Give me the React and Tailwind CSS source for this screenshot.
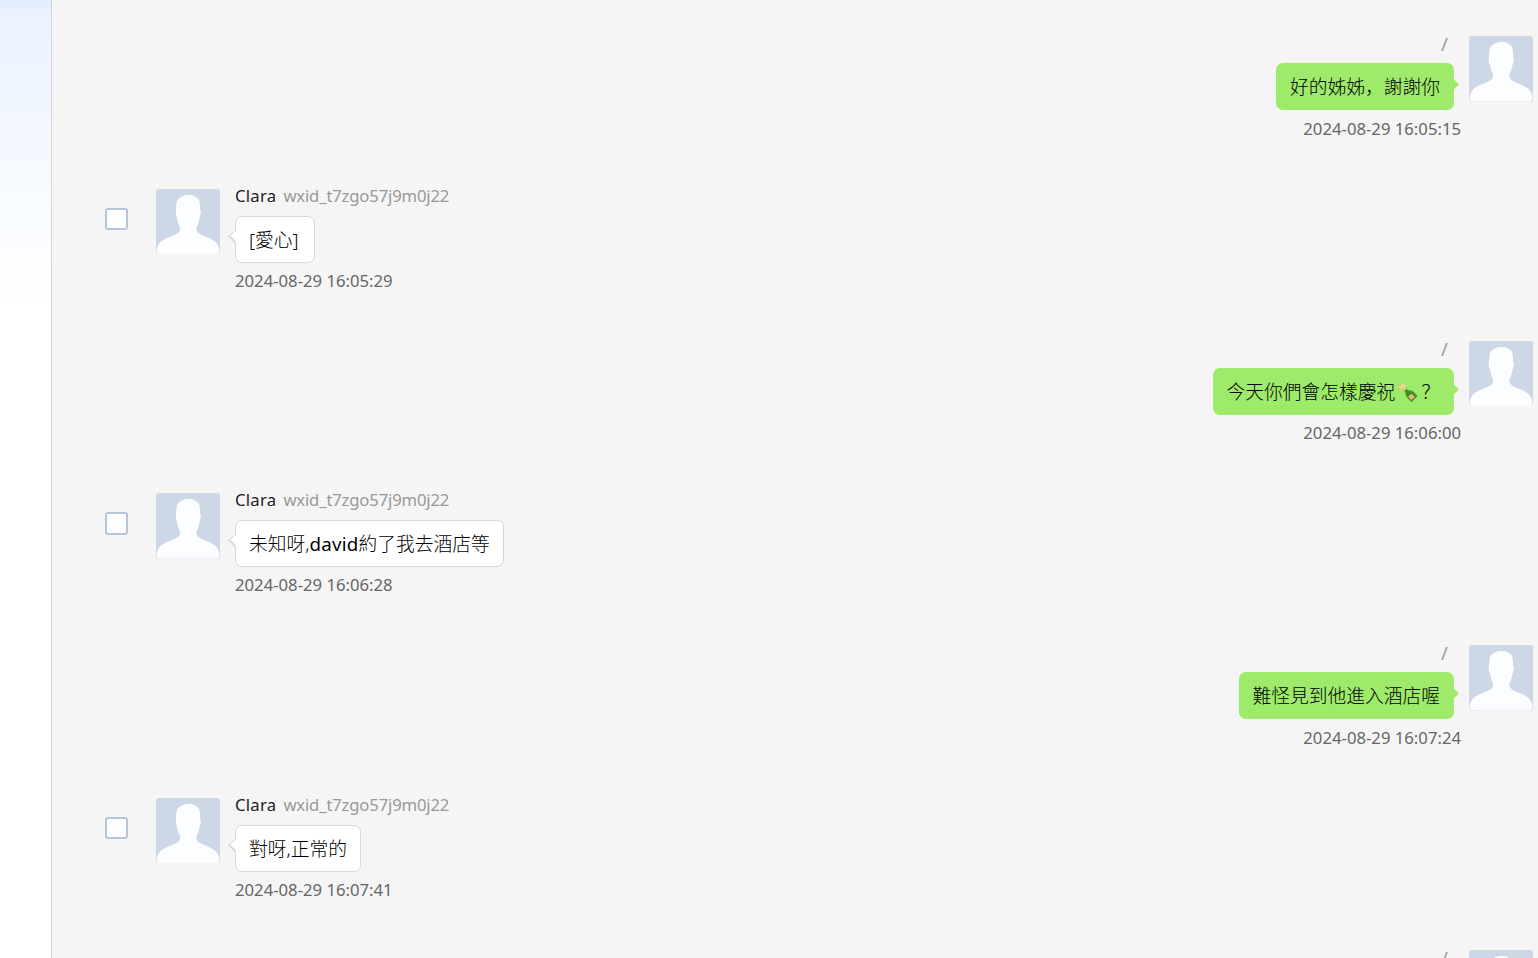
const messages = [
  { side: 'out', text: '好的姊姊，謝謝你', time: '2024-08-29 16:05:15' },
  { side: 'in', text: '[愛心]', time: '2024-08-29 16:05:29' },
  { side: 'out', text: '今天你們會怎樣慶祝', champagne: true, tail: '？', time: '2024-08-29 16:06:00' },
  { side: 'in', text: '未知呀,', latin: 'david', tail: '約了我去酒店等', time: '2024-08-29 16:06:28' },
  { side: 'out', text: '難怪見到他進入酒店喔', time: '2024-08-29 16:07:24' },
  { side: 'in', text: '對呀,正常的', time: '2024-08-29 16:07:41' },
  { side: 'out', text: '', time: '' },
];

function Avatar() {
  return (
    <svg className="h-[65.6px] w-16 shrink-0 rounded-[3px]" viewBox="0 0 64 66" preserveAspectRatio="none">
      <rect width="64" height="66" fill="#cdd7e6" />
      <path
        d="M33 6C35.500 6 38 6.300 39.500 8C43.300 9 44.300 13 44 20C45.300 22 45 26.500 43.500 29C43 33 42 36 40.500 38.500C40 41 41 43.500 43.500 45C50 48.500 57 50 60.500 54.500C62.500 57 63.500 60 63.500 63Q63 66 60 66H4Q1 66 .5 63C.5 60 1.500 57 3.500 54.500C7 50 14 48.500 21 45C23.500 43.500 24.500 41 24 38.500C22.500 36 21.600 33 21.200 29.500C19.800 27.500 19.300 23 20.200 20C20 13 21.500 9.500 25 8C27.500 6.500 30 6 33 6Z"
        fill="#fbfdff"
      />
    </svg>
  );
}

function Champagne() {
  return (
    <svg className="mx-[3px] inline-block h-5 w-5 align-[-4px]" viewBox="0 0 20 20">
      <path d="M1 1.500L5 .5L8 3L7 6L4 7L1 4Z" fill="#f5dc9a" opacity=".8" />
      <circle cx="2" cy="2" r="1.100" fill="#f2a96b" />
      <circle cx="6.500" cy="1.300" r=".8" fill="#f2b98b" />
      <circle cx="1.500" cy="6.200" r=".7" fill="#e6b36a" />
      <path d="M4 5.800L6.200 3.800L10 7.200C13 7 14.500 7.700 16 9.300L19.500 13.300L13.300 19L9.200 14.500C7.500 12.500 7.200 11 7.600 9.400Z" fill="#3f8f22" />
      <path d="M4 5.800L6.200 3.800L8.300 5.700L6.200 8Z" fill="#f3d48a" />
      <path d="M10.200 13.700L13.500 10.700L16.800 14L13.300 17Z" fill="#f3b57b" />
    </svg>
  );
}

function Outgoing({ message }) {
  return (
    <div className="flex h-[152.27px] shrink-0 items-start justify-end pr-[5px]">
      <div className="mr-2 flex flex-col items-end">
        <div className="mr-[13px] h-[27px] text-[18.5px] leading-4 text-[#999]">/</div>
        {message.text && (
          <div className="relative mr-[7px] h-[47px] rounded-[7px] bg-[#9eea6a] px-3.5 text-[18.75px] leading-[47px] font-light whitespace-nowrap text-black">
            <span className="absolute top-[17px] -right-[3px] size-[9px] rotate-45 bg-[#9eea6a]" />
            {message.text}
            {message.champagne && <Champagne />}
            {message.tail}
          </div>
        )}
        <div className="mt-[6.6px] text-[16.7px] leading-6 text-[#666]">{message.time}</div>
      </div>
      <Avatar />
    </div>
  );
}

function Incoming({ message }) {
  return (
    <div className="flex h-[152.27px] shrink-0 items-start pl-[53px]">
      <span className="mt-[19px] mr-7 h-[22.5px] w-[23px] shrink-0 rounded-[3px] border-2 border-[#b5c6db] bg-white" />
      <Avatar />
      <div className="ml-[15px] flex flex-col items-start">
        <div className="flex h-[27px] gap-[7px] text-[16.7px] leading-[14px]">
          <span className="tracking-[0.25px] text-[#222]">Clara</span>
          <span className="tracking-[-0.18px] text-[#999]">wxid_t7zgo57j9m0j22</span>
        </div>
        <div className="relative h-[47px] min-w-20 rounded-[7px] border border-[#d3dadb] bg-white px-[13px] text-[18.75px] leading-[45px] font-light whitespace-nowrap text-black">
          <span className="absolute top-[15px] -left-[6px] size-[9px] rotate-45 border-b-2 border-l border-[#d3dadb] bg-white" />
          {message.text}
          {message.latin && <span className="font-normal tracking-[0.2px]">{message.latin}</span>}
          {message.tail}
        </div>
        <div className="mt-[6.4px] text-[16.7px] leading-6 text-[#666]">{message.time}</div>
      </div>
    </div>
  );
}

export default function App() {
  return (
    <div className="flex h-[958px] w-[1538px] overflow-hidden bg-[#f5f5f5] font-['Noto_Sans','Noto_Sans_CJK_SC',sans-serif]">
      <aside className="flex w-[52px] shrink-0 flex-col border-r border-[#d3d5d8] bg-white">
        <div className="h-2 bg-[#e3eefc]" />
        <div className="h-[302px] bg-linear-to-b from-[#e9f2fe] via-[#f5f9ff] to-white" />
      </aside>
      <main className="flex flex-1 flex-col overflow-hidden pt-[36.3px]">
        {messages.map((message, index) =>
          message.side === 'out' ? <Outgoing key={index} message={message} /> : <Incoming key={index} message={message} />
        )}
      </main>
    </div>
  );
}
